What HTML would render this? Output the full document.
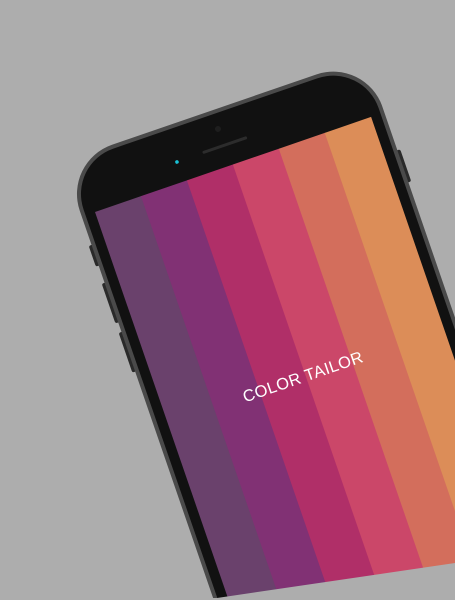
<!DOCTYPE html>
<html><head><style>
html,body{margin:0;padding:0;width:455px;height:600px;overflow:hidden;background:#adadad}
svg{display:block}
</style></head><body>
<svg width="455" height="600" viewBox="0 0 455 600" xmlns="http://www.w3.org/2000/svg">
<rect width="455" height="600" fill="#adadad"/>
<g transform="translate(95,212) rotate(-19)">
  <rect x="-17" y="30" width="5" height="22" rx="2" fill="#2a2a2a"/>
  <rect x="-17" y="70" width="5" height="42" rx="2" fill="#2a2a2a"/>
  <rect x="-17" y="122" width="5" height="42" rx="2" fill="#2a2a2a"/>
  <rect x="304" y="40" width="5" height="34" rx="2" fill="#2a2a2a"/>
  <rect x="-14" y="-58" width="320" height="800" rx="52" fill="#4a4a4a"/>
  <rect x="-10" y="-54" width="312" height="792" rx="48" fill="#111"/>
  <rect x="0" y="0" width="49" height="700" fill="#6a416c"/>
  <rect x="48.6" y="0" width="49" height="700" fill="#813174"/>
  <rect x="97.2" y="0" width="49" height="700" fill="#b02f68"/>
  <rect x="145.8" y="0" width="49" height="700" fill="#cb4769"/>
  <rect x="194.4" y="0" width="49" height="700" fill="#d36e5c"/>
  <rect x="243" y="0" width="49" height="700" fill="#dc8d58"/>
  <rect x="121" y="-22.5" width="47" height="3" rx="1.5" fill="#2c2c2c"/>
  <circle cx="143.3" cy="-38.5" r="3" fill="#1e1e1e"/>
  <circle cx="93.8" cy="-20.6" r="1.8" fill="#19c2d6"/>
  <text x="143" y="229" text-anchor="middle" fill="#fff" font-family="Liberation Sans, sans-serif" font-size="16.5" letter-spacing="0.4">COLOR TAILOR</text>
</g>
<polygon points="0,600 0,598 217,598 455,563 455,600" fill="#adadad"/>
</svg>
</body></html>
